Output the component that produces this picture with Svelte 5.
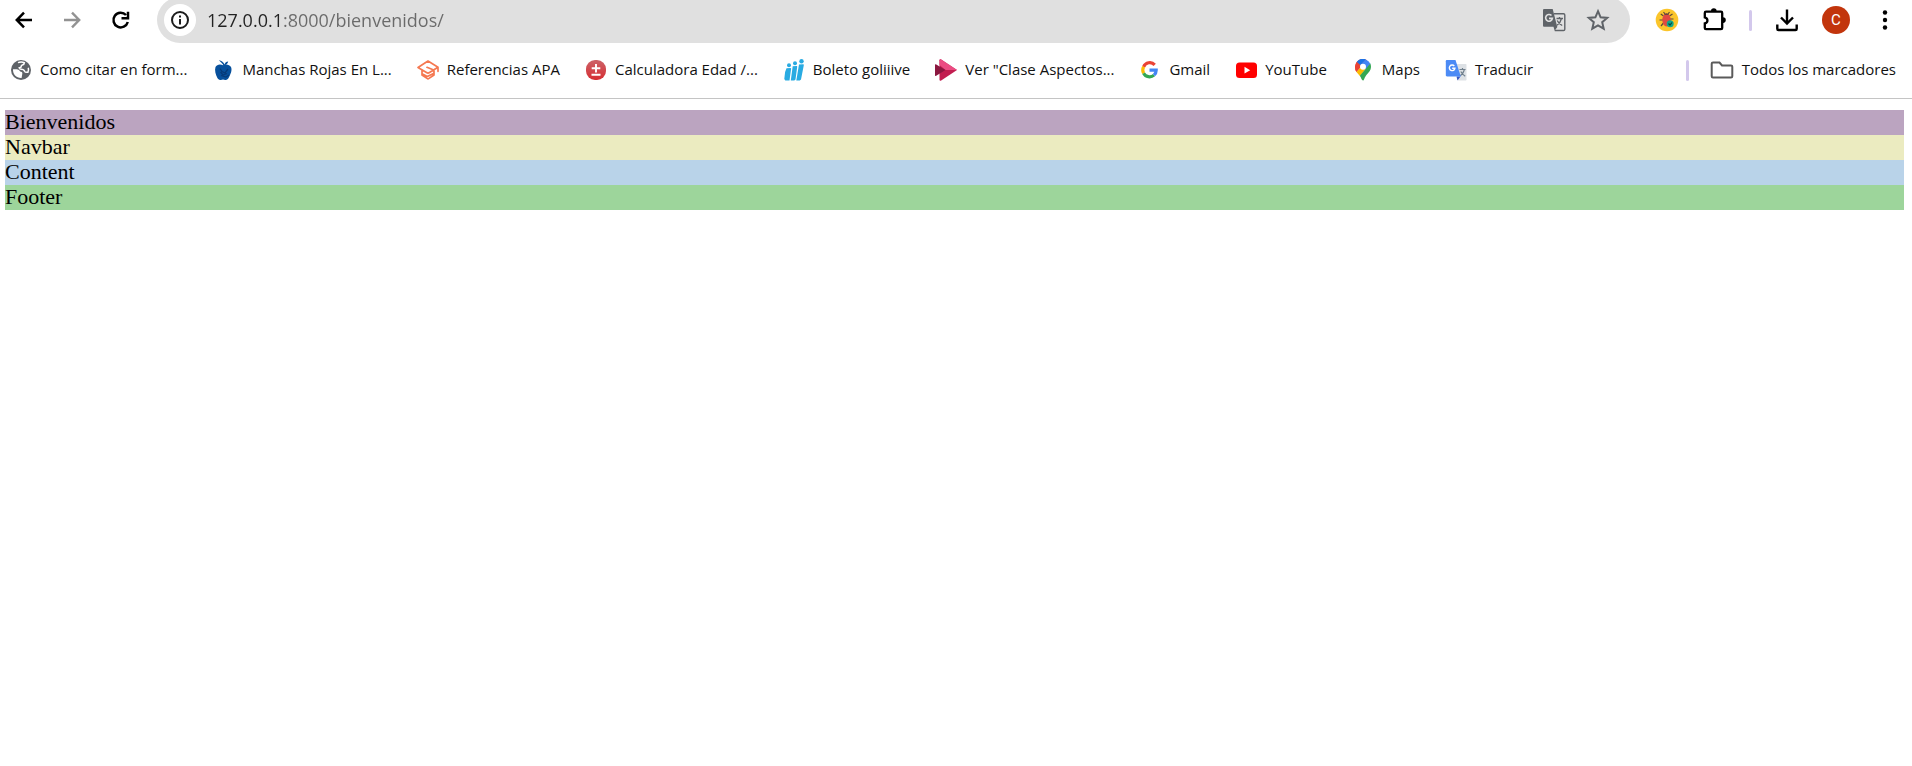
<script>
  let url = $state('127.0.0.1:8000/bienvenidos/');

  const bookmarks = [
    { icon: 'globe', label: 'Como citar en form...' },
    { icon: 'apple', label: 'Manchas Rojas En L...' },
    { icon: 'cap', label: 'Referencias APA' },
    { icon: 'calc', label: 'Calculadora Edad /...' },
    { icon: 'people', label: 'Boleto goliiive' },
    { icon: 'stream', label: 'Ver "Clase Aspectos...' },
    { icon: 'google', label: 'Gmail' },
    { icon: 'youtube', label: 'YouTube' },
    { icon: 'maps', label: 'Maps' },
    { icon: 'translate', label: 'Traducir' }
  ];
</script>

{#snippet favicon(name)}
  <svg class="favicon" viewBox="0 0 22 22" aria-hidden="true">
    {#if name === 'globe'}
      <circle cx="11" cy="11" r="10" fill="#5f6368" />
      <path d="M3 10.300c2 0 4-.2 5.500.5 1.200.6 1.300 1.800 2.500 2 1.200.2 1.500.9 1.300 1.900l-.7 4.200C6.500 19.200 2.700 15.500 3 10.300z" fill="#fff" />
      <path d="M8 3.600c2-.9 4.400-.9 6.400 0-.1 1.500-.9 2.100-2.100 2.300-.9.100-1.100.6-1.100 1.400 0 1.100-.9 1.500-2 1.500 0 1 .6 1.400 1.800 1.400 2 0 3.200.6 3.600 2 .3.900 1.400 1.200 3.300 1 .6-1.400.8-2.900.4-4.400" fill="none" stroke="#fff" stroke-width="1.500" />
    {:else if name === 'apple'}
      <path d="M11 6.300C8.500 4.800 4.900 5.200 3.500 8c-1.100 3 .1 7.700 1.900 11 1.300 2.100 3.500 2.600 5.600 1.600 2.100 1 4.300.5 5.600-1.600 1.800-3.300 3.900-8 2.400-11-1.500-2.800-5.500-3.200-8-1.700z" fill="#07509c" />
      <path d="M11.500 6.500C10.500 4.500 8.700 2.700 6.800 1.200c3 .3 5 2 5.700 4.300.6-2 1.800-2.900 3.700-3-.3 1.900-1.600 3.500-4.700 4z" fill="#07509c" />
      <path d="M8 9.500l2 3 3 1.500 3-4M8.500 13l2.500 3 4-1.500M9 16.500l5 1.500 3-2" fill="none" stroke="#073a78" stroke-width="1.300" />
    {:else if name === 'cap'}
      <path d="M1 8.500L11 2l10 6.200-8.500 5.300c-1 .7-2 .7-3 0zM5 11.800V16l5 3.400c.7.5 1.300.5 2 0l5-3.400v-4M21 8.300v4M10 8.300l5.500 2.200M5.500 15l4.800 2.500 5.700-2.800" fill="none" stroke="#f57851" stroke-width="1.700" stroke-linejoin="round" stroke-linecap="round" />
    {:else if name === 'calc'}
      <defs>
        <linearGradient id="calcFill" x2="0" y2="1">
          <stop offset="0" stop-color="#cc6268" />
          <stop offset="1" stop-color="#d62e32" />
        </linearGradient>
      </defs>
      <rect x="1" y="1" width="20" height="20" rx="9" fill="url(#calcFill)" />
      <path d="M11 5v8.500M6.700 9.300h8.600M6.500 15.800h9" stroke="#fff" stroke-width="1.900" />
    {:else if name === 'people'}
      <g fill="#29abe2">
        <circle cx="6" cy="6.200" r="2" /><circle cx="12" cy="4.200" r="2" /><circle cx="18.500" cy="2.300" r="2.200" />
        <path d="M3.500 9.300l4-.3c.8 0 .7.8.5 1.600L6.500 21.500H2.300L1.300 20l.8-7zM9.700 7.300l3.800-.3c.8 0 .8.7.6 1.500L12.500 20.500l-1.200 1H7.800zM16 5.500l4-.3c.9 0 .9.7.7 1.500L18 20.500l-1.200 1h-3.500z" />
      </g>
    {:else if name === 'stream'}
      <path d="M4.500 1.200c0-1 .8-1.300 1.700-.8L22 11 6.200 21.600c-.9.500-1.700.2-1.700-.8z" fill="#c21d50" />
      <path d="M4.500 1.200c0-1 .8-1.300 1.700-.8L22 11H10.500l-6-5z" fill="#eb4b82" />
      <path d="M0 6c0-.9.500-1.100 1.200-.6L10.500 11l-9.300 5.800C.5 17.300 0 17 0 16.200z" fill="#8b1740" />
    {:else if name === 'google'}
      <g fill="none" stroke-width="3.200">
        <path d="M15.700 5.800A6.700 6.700 0 0 0 4.600 7.800" stroke="#ea4335" />
        <path d="M4.600 7.800a6.900 6.900 0 0 0 0 6.400" stroke="#fbbc05" />
        <path d="M4.600 14.200a6.700 6.700 0 0 0 10.400 1.900" stroke="#34a853" />
        <path d="M15 16.100A6.600 6.600 0 0 0 17.200 11.200H10.500" stroke="#4285f4" />
      </g>
    {:else if name === 'youtube'}
      <rect x="1" y="3.500" width="21" height="15.500" rx="3.500" fill="#f00" />
      <path d="M9.500 7.800v6.700l5.700-3.300z" fill="#fff" />
    {:else if name === 'maps'}
      <path d="M3 8a8 8 0 0 0 1.500 4.900L15.200 1.200A8 8 0 0 0 3 8z" fill="#ea4335" />
      <path d="M4.700 3.100l3.500 3.200 5.700-5.900A8 8 0 0 0 4.700 3.100z" fill="#1a73e8" />
      <path d="M13.500.4L8.200 6.200l5.600 4.300 4.700-5.600A8 8 0 0 0 13.500.4z" fill="#4285f4" />
      <path d="M3 8l1.700-4.900 3.500 3.200-3.700 6.600A8 8 0 0 1 3 8z" fill="#ea4335" />
      <path d="M4.500 12.900c1 1.400 2.300 2.500 3.400 4.200L13.800 10 8.100 8.900z" fill="#fbbc04" />
      <path d="M18.300 4.500L7.800 16.800c1.400 2 2 4.800 3.200 4.800s1.500-3.500 3.600-5.800S19 11.500 19 8a8 8 0 0 0-.7-3.500z" fill="#34a853" />
      <circle cx="11" cy="7.800" r="3" fill="#fff" />
    {:else}
      <path d="M9 5h11.500c.6 0 1 .4 1 1v14.500c0 .6-.4 1-1 1H13z" fill="#dde1e5" />
      <path d="M11.500 17.500h4l-3 4z" fill="#3457c5" />
      <path d="M14.500 10.500h6M17.500 9v1.500M19.300 11c-.8 2.700-2 4.300-4 5.800M15.800 12.500c1 2 2.200 3.300 4.400 4.700" fill="none" stroke="#6f7f8c" stroke-width="1.200" />
      <path d="M2 1h8.500l5.300 16.500H2c-.7 0-1.200-.5-1.200-1.200v-14C.8 1.500 1.300 1 2 1z" fill="#4c8bf5" />
      <path d="M9.300 7A2.800 2.800 0 1 0 9.900 9.300H7.200" fill="none" stroke="#fff" stroke-width="1.400" />
    {/if}
  </svg>
{/snippet}

<div class="browser">
  <header>
    <div class="toolbar">
      <nav class="history" aria-label="Historial">
        <button aria-label="Atrás">
          <svg viewBox="0 0 24 24"><path d="M20 12H5.500M12 4.700L4.800 12l7.200 7.300" fill="none" stroke="#000" stroke-width="2.500" /></svg>
        </button>
        <button aria-label="Adelante">
          <svg viewBox="0 0 24 24"><path d="M4 12h14.500M12 4.700l7.200 7.300-7.200 7.300" fill="none" stroke="#929292" stroke-width="2.400" /></svg>
        </button>
        <button aria-label="Volver a cargar">
          <svg viewBox="0 0 24 24"><path d="M18 7A7.300 7.300 0 1 0 19.800 14M20 3.700v6.600H13.500" fill="none" stroke="#000" stroke-width="2.500" /></svg>
        </button>
      </nav>

      <div class="omnibox">
        <button class="site-info" aria-label="Información del sitio">
          <svg viewBox="0 0 20 20"><circle cx="10" cy="10" r="8" fill="none" stroke="#1c1c1c" stroke-width="2" /><path d="M10 9v5.500M10 5.500v2" stroke="#1c1c1c" stroke-width="2" /></svg>
        </button>
        <input type="text" aria-label="Dirección" spellcheck="false" bind:value={url} />
        <button aria-label="Traducir esta página">
          <svg viewBox="0 0 24 24">
            <path d="M12 5.700h9.500c.8 0 1.300.5 1.300 1.300v14.200c0 .8-.5 1.300-1.300 1.300H12.800" fill="none" stroke="#5f6368" stroke-width="1.400" />
            <path d="M2.300 1h8.400l4.500 17.800H2.300C1.500 18.800 1 18.300 1 17.500V2.300C1 1.500 1.500 1 2.300 1zM11.500 18.800h4l-2.800 4z" fill="#5f6368" />
            <path d="M9.500 7.500A3.400 3.400 0 1 0 10.400 10.400H7" fill="none" stroke="#e0e0e0" stroke-width="1.600" />
            <path d="M14.500 10.500H21M17.500 9v1.500M19.500 10.500c-.7 3-2.200 5-4.500 6.700M15.200 12.500c1 2.200 2.500 3.700 5 5" fill="none" stroke="#5f6368" stroke-width="1.300" />
          </svg>
        </button>
        <button aria-label="Agregar a marcadores">
          <svg viewBox="0 0 24 24"><path d="M12 3.200l2.600 6.100 6.600.6-5 4.300 1.500 6.500-5.700-3.400-5.700 3.400 1.500-6.500-5-4.300 6.600-.6z" fill="none" stroke="#5f6368" stroke-width="2" /></svg>
        </button>
      </div>

      <div class="actions">
        <button aria-label="Extensión">
          <svg viewBox="0 0 24 24">
            <circle cx="12" cy="12" r="11.300" fill="#fbc52b" />
            <path d="M8.500 8L5.800 6M8 12H4.500M8.500 15L6 18M14.500 8l3-2M15 11h3.500M10 6L8.500 4M13 6l1.500-2" stroke="#5b4a3d" stroke-width="1.200" />
            <ellipse cx="11.500" cy="12" rx="4.200" ry="6.500" fill="#e04a42" />
            <path d="M9 7a2.700 2.700 0 0 1 5 0z" fill="#6b4640" />
            <circle cx="15.200" cy="15.700" r="3.500" fill="#10a889" />
            <path d="M13.500 15.500l1.500 1.500 2-2.500" fill="none" stroke="#08463b" stroke-width="1.200" />
          </svg>
        </button>
        <button aria-label="Extensiones">
          <svg viewBox="0 0 24 24">
            <path d="M4 3.700h15c.8 0 1.200.4 1.200 1.200v15c0 .8-.4 1.200-1.200 1.200H4c-.8 0-1.200-.4-1.200-1.200v-4.500c3.500-1 3.500-5 0-6V4.900c0-.8.400-1.200 1.200-1.200z" fill="none" stroke="#000" stroke-width="2.300" />
            <path d="M9 3a2.800 2.800 0 0 1 5.600 0zM21 9.300a2.800 2.800 0 0 1 0 5.600z" fill="#000" />
          </svg>
        </button>
        <span class="divider"></span>
        <button aria-label="Descargas">
          <svg viewBox="0 0 24 24"><path d="M12 1.500v13M6 9.500l6 6 6-6M2.300 16.500v4.200c0 .8.400 1.300 1.200 1.300h17c.8 0 1.200-.5 1.200-1.300v-4.200" fill="none" stroke="#000" stroke-width="2.400" /></svg>
        </button>
        <button class="avatar" aria-label="Perfil">C</button>
        <button aria-label="Menú">
          <svg viewBox="0 0 24 24"><g fill="#000"><circle cx="12" cy="4.500" r="2.200" /><circle cx="12" cy="12" r="2.200" /><circle cx="12" cy="19.500" r="2.200" /></g></svg>
        </button>
      </div>
    </div>

    <nav class="bookmarks" aria-label="Marcadores">
      {#each bookmarks as mark}
        <a href="#{mark.icon}">{@render favicon(mark.icon)}<span>{mark.label}</span></a>
      {/each}
      <span class="divider"></span>
      <a class="all" href="#todos">
        <svg class="folder" viewBox="0 0 24 22"><path d="M3 3.500h6.500l2.500 3h9c.8 0 1.300.4 1.300 1.200v9.600c0 .8-.5 1.200-1.300 1.200H3c-.8 0-1.300-.4-1.300-1.200V4.700c0-.8.500-1.200 1.300-1.200z" fill="none" stroke="#5a5a5a" stroke-width="2" /></svg>
        <span>Todos los marcadores</span>
      </a>
    </nav>
  </header>

  <main>
    <div class="band welcome">Bienvenidos</div>
    <div class="band navbar">Navbar</div>
    <div class="band content">Content</div>
    <div class="band footer">Footer</div>
  </main>
</div>

<style>
  :global(body) {
    background: #fff;
  }

  .browser {
    overflow: hidden;
    font-family: 'Segoe UI', 'Open Sans', sans-serif;
  }

  header {
    border-bottom: 1px solid #c4c4c4;
  }

  button {
    flex: none;
    display: grid;
    place-items: center;
    width: 24px;
    height: 24px;
    padding: 0;
    border: 0;
    background: none;
  }

  button svg {
    display: block;
    width: 100%;
  }

  .toolbar {
    display: flex;
    align-items: center;
    height: 46px;
    margin-top: -3px;
    padding: 0 15px 0 12px;
  }

  .history {
    display: flex;
    gap: 24px;
    margin-right: 25px;
  }

  .omnibox {
    flex: 1;
    display: flex;
    align-items: center;
    gap: 20px;
    height: 46px;
    box-sizing: border-box;
    padding: 0 20px 0 7px;
    border-radius: 23px;
    background: #e0e0e0;
  }

  .site-info {
    width: 32px;
    height: 32px;
    margin-right: -9px;
    border-radius: 50%;
    background: #fff;
  }

  .site-info svg {
    width: 20px;
  }

  input {
    flex: 1;
    min-width: 0;
    padding: 0;
    border: 0;
    outline: 0;
    font: 18px/28px 'Segoe UI', 'Open Sans', sans-serif;
    color: transparent;
    caret-color: #1f1f1f;
    background: linear-gradient(90deg, #222 74px, #6a6a6a 74px);
    background-clip: text;
  }

  .actions {
    display: flex;
    align-items: center;
    gap: 23px;
    margin-left: 25px;
  }

  .divider {
    flex: none;
    width: 3px;
    height: 21px;
    border-radius: 2px;
    background: #d3c8ec;
  }

  .avatar {
    width: 28px;
    height: 28px;
    border-radius: 50%;
    background: #c2350c;
    color: #fff;
    font: 15px Roboto, sans-serif;
  }

  .bookmarks {
    display: flex;
    align-items: center;
    gap: 25px;
    height: 55px;
    box-sizing: border-box;
    padding: 0 16px 1px 10px;
    white-space: nowrap;
  }

  .bookmarks a {
    display: flex;
    align-items: center;
    gap: 8px;
    color: #111;
    font-size: 15px;
    line-height: 20px;
    text-decoration: none;
  }

  .bookmarks a span {
    padding-bottom: 2px;
  }

  .bookmarks .divider {
    margin-left: auto;
  }

  .bookmarks .all {
    margin-left: -4px;
  }

  .favicon {
    flex: none;
    width: 22px;
    height: 22px;
  }

  .folder {
    flex: none;
    width: 24px;
    height: 22px;
  }

  main {
    padding: 11px 8px 0 5px;
    font-family: 'Liberation Serif', 'Times New Roman', serif;
    font-size: 22px;
    line-height: 23px;
    color: #000;
  }

  .band {
    padding-bottom: 2px;
  }

  .welcome {
    background: #bba4c0;
  }

  .navbar {
    background: #ebebc0;
  }

  .content {
    background: #b9d3e9;
  }

  .footer {
    background: #9dd59b;
  }
</style>
